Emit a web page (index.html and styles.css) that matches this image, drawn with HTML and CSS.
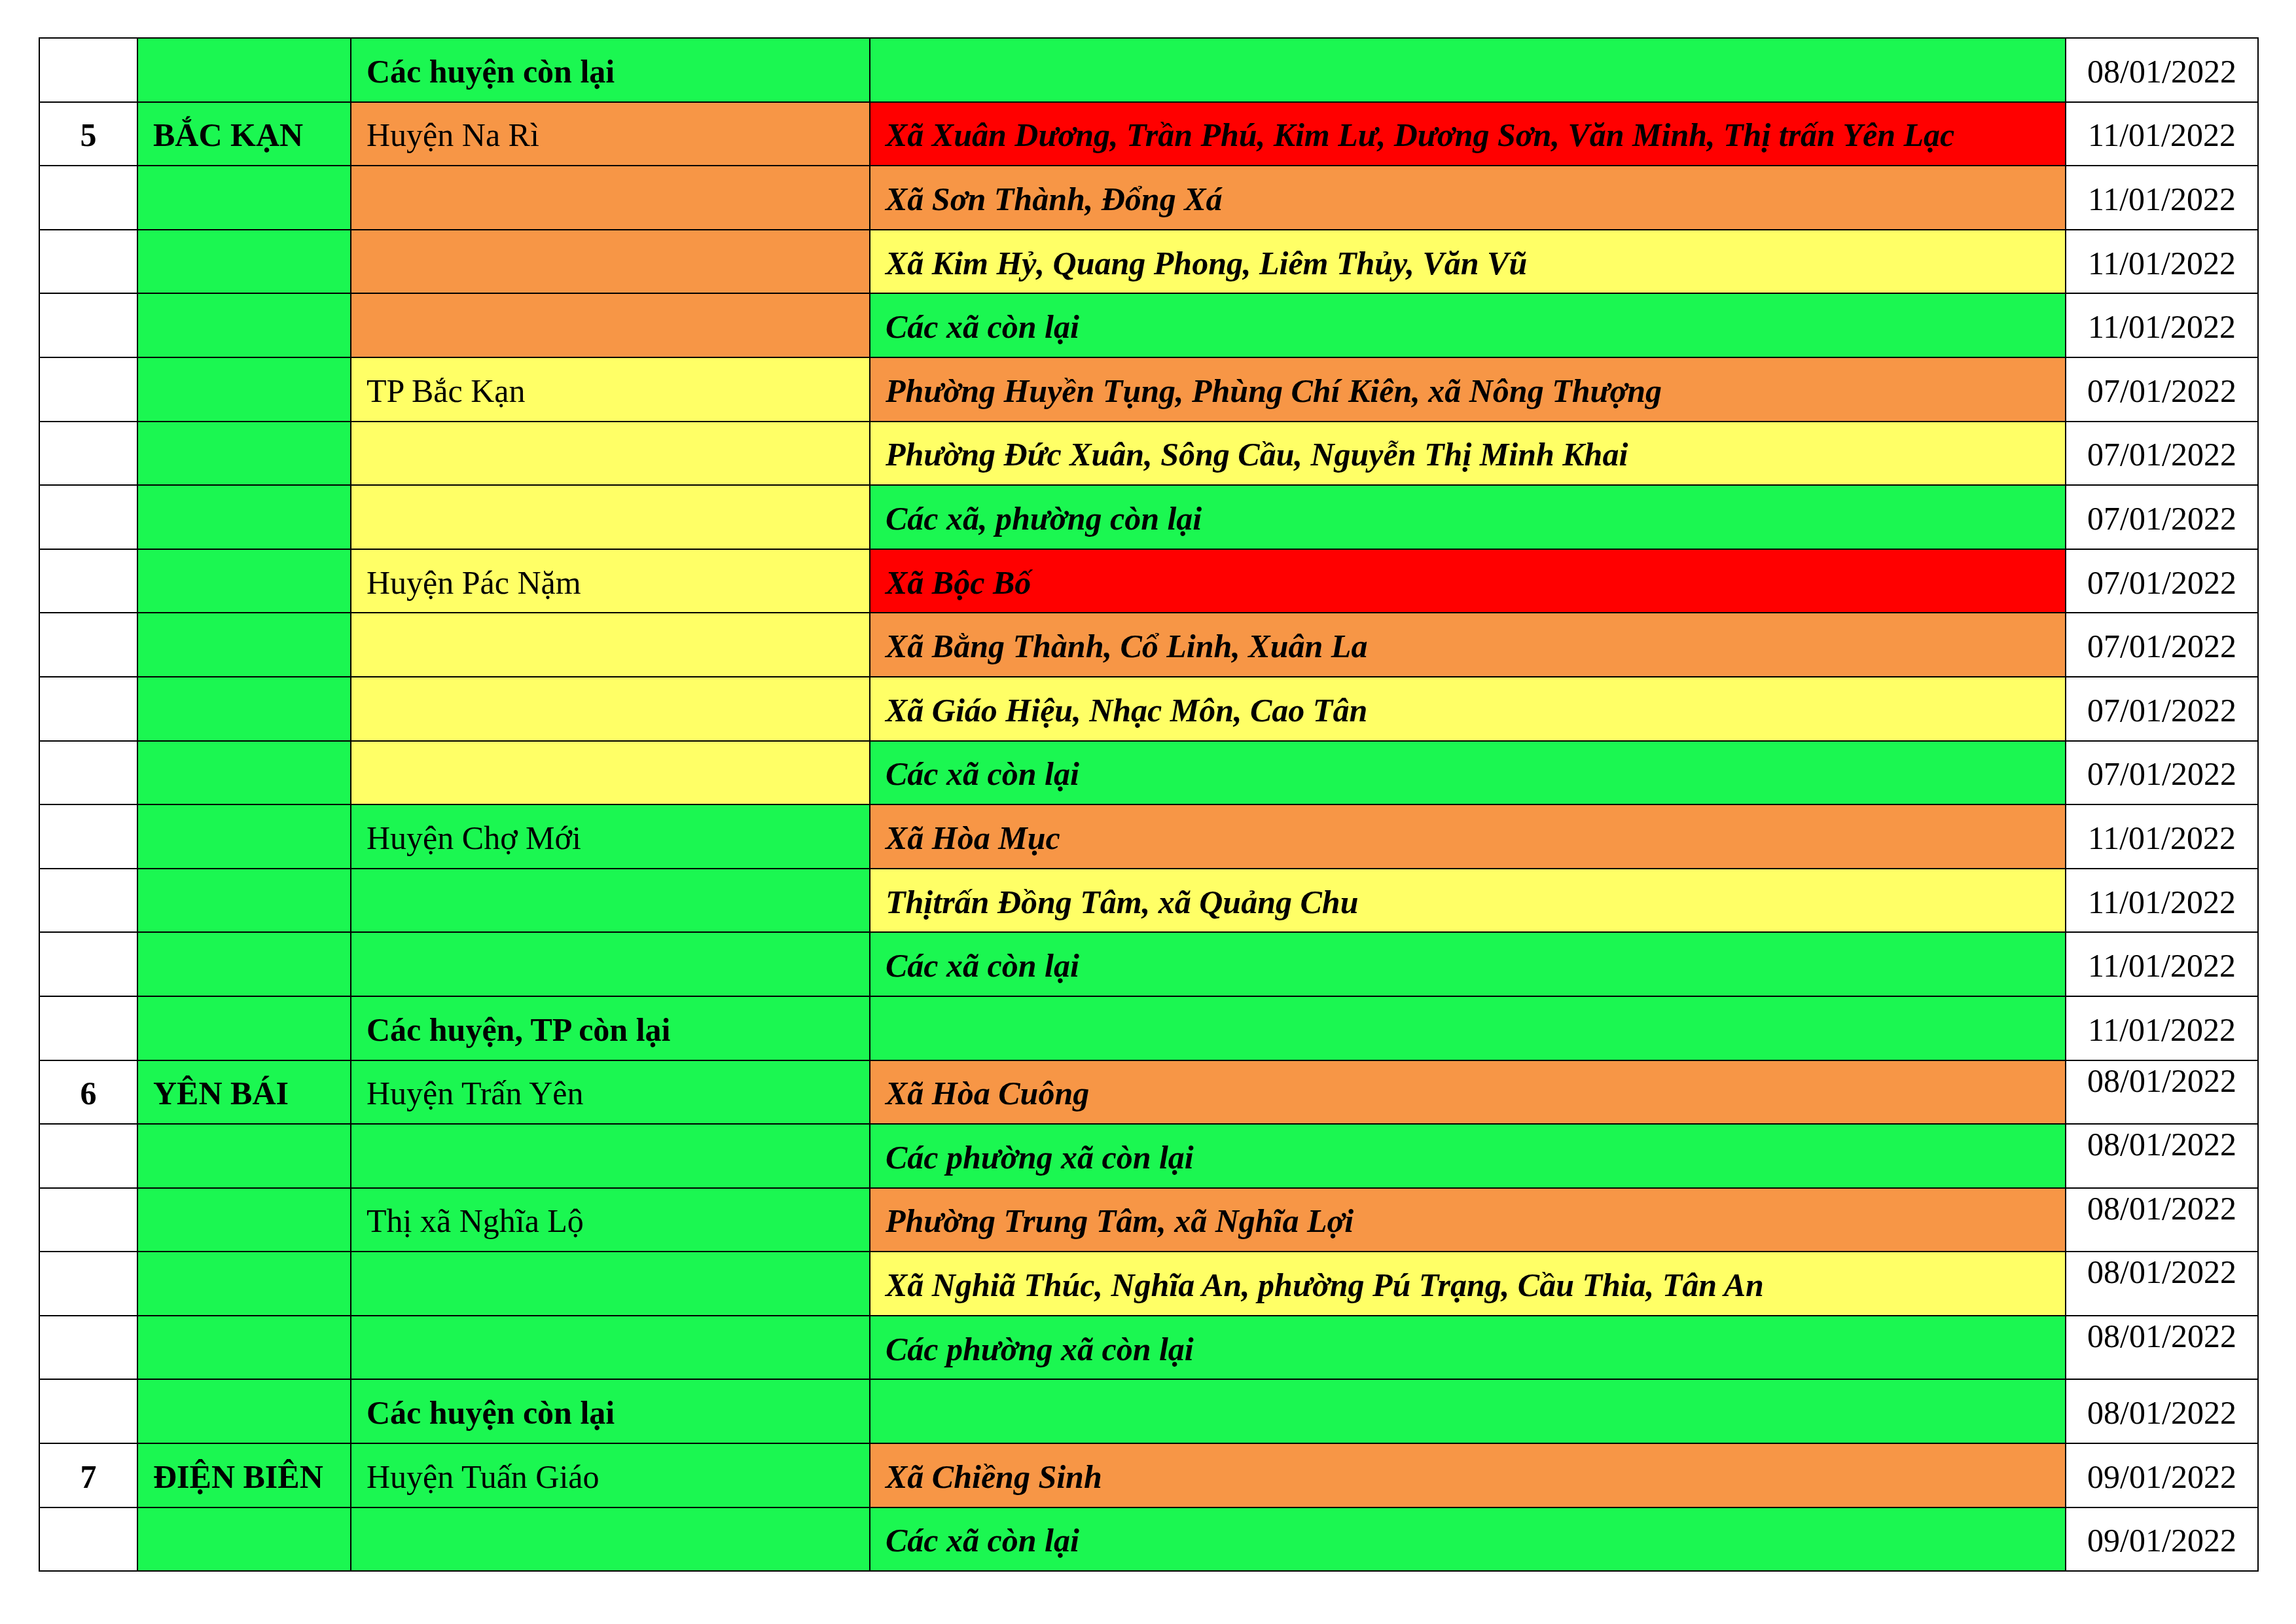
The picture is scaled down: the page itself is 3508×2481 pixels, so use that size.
FILE: index.html
```html
<!DOCTYPE html>
<html lang="vi">
<head>
<meta charset="utf-8">
<title>Bảng phân loại cấp độ dịch</title>
<link rel="stylesheet" href="styles.css">
</head>
<body>
<div class="page">
<table class="grid">
<colgroup>
<col class="c-no"><col class="c-prov"><col class="c-dist"><col class="c-comm"><col class="c-date">
</colgroup>
<tbody>
<tr><td class="no"></td><td class="prov g"></td><td class="dist g b">Các huyện còn lại</td><td class="comm g"></td><td class="date">08/01/2022</td></tr>
<tr><td class="no">5</td><td class="prov g">BẮC KẠN</td><td class="dist o">Huyện Na Rì</td><td class="comm r">Xã Xuân Dương, Trần Phú, Kim Lư, Dương Sơn, Văn Minh, Thị trấn Yên Lạc</td><td class="date">11/01/2022</td></tr>
<tr><td class="no"></td><td class="prov g"></td><td class="dist o"></td><td class="comm o">Xã Sơn Thành, Đổng Xá</td><td class="date">11/01/2022</td></tr>
<tr><td class="no"></td><td class="prov g"></td><td class="dist o"></td><td class="comm y">Xã Kim Hỷ, Quang Phong, Liêm Thủy, Văn Vũ</td><td class="date">11/01/2022</td></tr>
<tr><td class="no"></td><td class="prov g"></td><td class="dist o"></td><td class="comm g">Các xã còn lại</td><td class="date">11/01/2022</td></tr>
<tr><td class="no"></td><td class="prov g"></td><td class="dist y">TP Bắc Kạn</td><td class="comm o">Phường Huyền Tụng, Phùng Chí Kiên, xã Nông Thượng</td><td class="date">07/01/2022</td></tr>
<tr><td class="no"></td><td class="prov g"></td><td class="dist y"></td><td class="comm y">Phường Đức Xuân, Sông Cầu, Nguyễn Thị Minh Khai</td><td class="date">07/01/2022</td></tr>
<tr><td class="no"></td><td class="prov g"></td><td class="dist y"></td><td class="comm g">Các xã, phường còn lại</td><td class="date">07/01/2022</td></tr>
<tr><td class="no"></td><td class="prov g"></td><td class="dist y">Huyện Pác Nặm</td><td class="comm r">Xã Bộc Bố</td><td class="date">07/01/2022</td></tr>
<tr><td class="no"></td><td class="prov g"></td><td class="dist y"></td><td class="comm o">Xã Bằng Thành, Cổ Linh, Xuân La</td><td class="date">07/01/2022</td></tr>
<tr><td class="no"></td><td class="prov g"></td><td class="dist y"></td><td class="comm y">Xã Giáo Hiệu, Nhạc Môn, Cao Tân</td><td class="date">07/01/2022</td></tr>
<tr><td class="no"></td><td class="prov g"></td><td class="dist y"></td><td class="comm g">Các xã còn lại</td><td class="date">07/01/2022</td></tr>
<tr><td class="no"></td><td class="prov g"></td><td class="dist g">Huyện Chợ Mới</td><td class="comm o">Xã Hòa Mục</td><td class="date">11/01/2022</td></tr>
<tr><td class="no"></td><td class="prov g"></td><td class="dist g"></td><td class="comm y">Thịtrấn Đồng Tâm, xã Quảng Chu</td><td class="date">11/01/2022</td></tr>
<tr><td class="no"></td><td class="prov g"></td><td class="dist g"></td><td class="comm g">Các xã còn lại</td><td class="date">11/01/2022</td></tr>
<tr><td class="no"></td><td class="prov g"></td><td class="dist g b">Các huyện, TP còn lại</td><td class="comm g"></td><td class="date">11/01/2022</td></tr>
<tr><td class="no">6</td><td class="prov g">YÊN BÁI</td><td class="dist g">Huyện Trấn Yên</td><td class="comm o">Xã Hòa Cuông</td><td class="date top">08/01/2022</td></tr>
<tr><td class="no"></td><td class="prov g"></td><td class="dist g"></td><td class="comm g">Các phường xã còn lại</td><td class="date top">08/01/2022</td></tr>
<tr><td class="no"></td><td class="prov g"></td><td class="dist g">Thị xã Nghĩa Lộ</td><td class="comm o">Phường Trung Tâm, xã Nghĩa Lợi</td><td class="date top">08/01/2022</td></tr>
<tr><td class="no"></td><td class="prov g"></td><td class="dist g"></td><td class="comm y">Xã Nghiã Thúc, Nghĩa An, phường Pú Trạng, Cầu Thia, Tân An</td><td class="date top">08/01/2022</td></tr>
<tr><td class="no"></td><td class="prov g"></td><td class="dist g"></td><td class="comm g">Các phường xã còn lại</td><td class="date top">08/01/2022</td></tr>
<tr><td class="no"></td><td class="prov g"></td><td class="dist g b">Các huyện còn lại</td><td class="comm g"></td><td class="date">08/01/2022</td></tr>
<tr><td class="no">7</td><td class="prov g">ĐIỆN BIÊN</td><td class="dist g">Huyện Tuấn Giáo</td><td class="comm o">Xã Chiềng Sinh</td><td class="date">09/01/2022</td></tr>
<tr><td class="no"></td><td class="prov g"></td><td class="dist g"></td><td class="comm g">Các xã còn lại</td><td class="date">09/01/2022</td></tr>
</tbody>
</table>
</div>
</body>
</html>
```

FILE: styles.css
```css
html, body {
  margin: 0;
  padding: 0;
  background: #ffffff;
}

.page {
  padding: 57px 0 0 59px;
  font-family: "Liberation Serif", "Times New Roman", serif;
  font-size: 50px;
  color: #000000;
}

.grid {
  border-collapse: collapse;
  table-layout: fixed;
  width: 3390px;
}

.c-no { width: 150px; }
.c-prov { width: 326px; }
.c-dist { width: 793px; }
.c-comm { width: 1827px; }
.c-date { width: 294px; }

.grid tr {
  height: 97.6px;
}

.grid td {
  border: 2px solid #000000;
  padding: 4px 22px 0 23px;
  vertical-align: middle;
  white-space: nowrap;
  line-height: normal;
  background: #ffffff;
}

.grid td.no {
  font-weight: bold;
  text-align: center;
  padding-left: 0;
  padding-right: 0;
}

.grid td.prov {
  font-weight: bold;
}

.grid td.b {
  font-weight: bold;
}

.grid td.comm {
  font-weight: bold;
  font-style: italic;
}

.grid td.date {
  text-align: center;
  padding-left: 0;
  padding-right: 0;
}

.grid td.date.top {
  vertical-align: top;
  padding-top: 1px;
}

.grid td.g { background: #1bf751; }
.grid td.o { background: #f79646; }
.grid td.y { background: #ffff66; }
.grid td.r { background: #ff0000; }
```
